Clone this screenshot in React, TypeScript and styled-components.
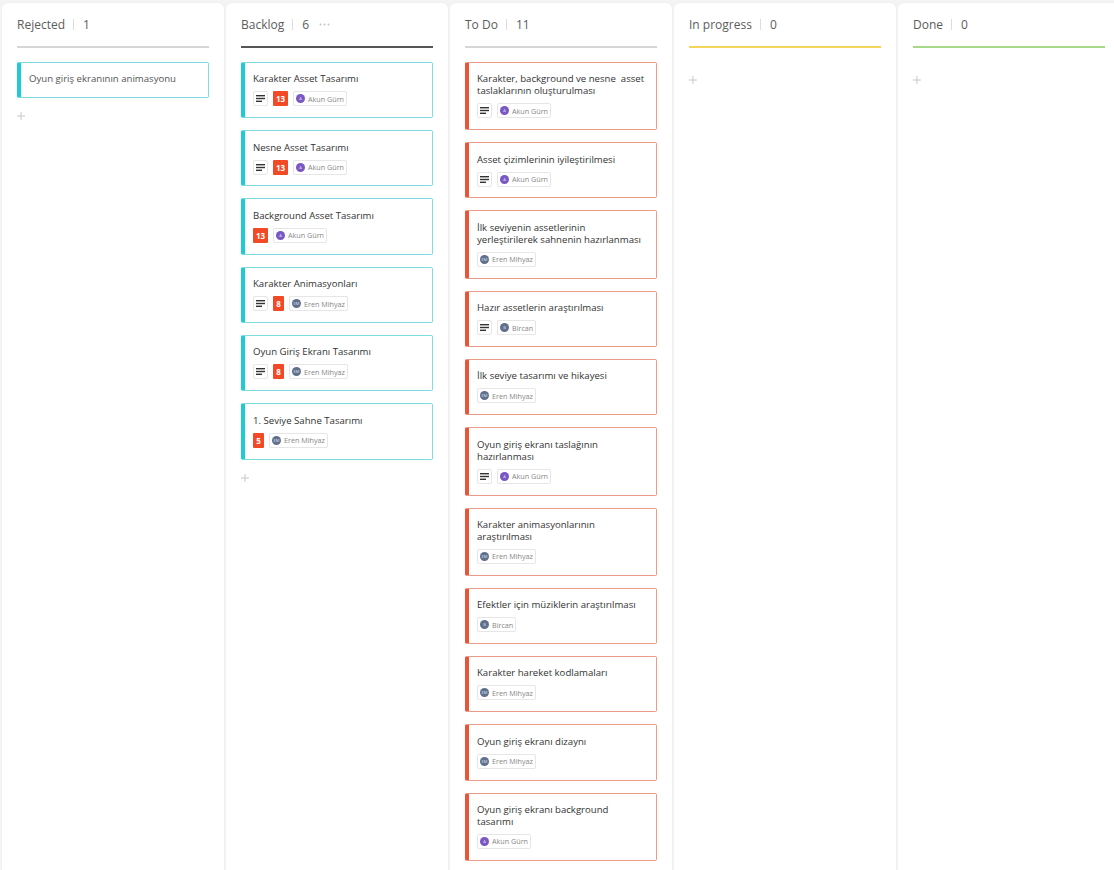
import React from "react";
import styled, { createGlobalStyle } from "styled-components";

const GlobalStyle = createGlobalStyle`
	html, body {
		margin: 0;
		padding: 0;
		height: 870px;
		overflow: hidden;
		background-color: #f4f4f4;
		font-family: "Open Sans", "Noto Sans", sans-serif;
	}
`;

const Board = styled.div`
	display: flex;
	gap: 2px;
	height: 870px;
	padding: 3px 0 0 2px;
	box-sizing: border-box;
	overflow: hidden;
`;

const Column = styled.section`
	flex: 0 0 222px;
	display: flex;
	flex-direction: column;
	box-sizing: border-box;
	padding: 0 15px;
	background-color: #fff;
	border-radius: 6px 6px 0 0;
	box-shadow: 0 0 2px rgba(0, 0, 0, 0.06);
`;

const Header = styled.header<{ $line: string }>`
	flex: none;
	display: flex;
	align-items: center;
	height: 45px;
	box-sizing: border-box;
	border-bottom: 2px solid ${(props) => props.$line};
	margin-bottom: 13.91px;
	font-size: 12px;
	color: #5c5c5c;
`;

const Separator = styled.span`
	width: 1px;
	height: 11px;
	margin: 0 9px 0 8px;
	background-color: #ddd;
`;

const Dots = styled.svg`
	margin-left: 10px;
`;

const CardList = styled.div`
	flex: none;
	display: flex;
	flex-direction: column;
	gap: 12px;
`;

const Card = styled.article<{ $color: string; $border: string }>`
	box-sizing: border-box;
	min-height: 36px;
	padding: 10.4px 10px 10.89px 8px;
	border: 1px solid ${(props) => props.$border};
	border-left: 4px solid ${(props) => props.$color};
	border-radius: 2px;
	background-color: #fff;
`;

const CardTitle = styled.div<{ $muted?: boolean }>`
	font-size: 9.6px;
	line-height: 12px;
	color: ${(props) => (props.$muted ? "#555" : "#333")};
	white-space: pre-wrap;
`;

const Meta = styled.div`
	display: flex;
	align-items: center;
	gap: 5px;
	margin-top: 6px;
	height: 15px;
`;

const IconChip = styled.span`
	display: flex;
	align-items: center;
	justify-content: center;
	width: 15px;
	height: 15px;
	box-sizing: border-box;
	border: 1px solid #e6e6e6;
	border-radius: 2px;
`;

const Points = styled.span<{ $wide?: boolean }>`
	display: flex;
	align-items: center;
	justify-content: center;
	width: ${(props) => (props.$wide ? "15px" : "11px")};
	height: 15px;
	background-color: #f24a26;
	color: #fff;
	font-size: 8px;
	font-weight: 700;
	border-radius: 1px;
`;

const Assignee = styled.span`
	display: flex;
	align-items: center;
	gap: 3px;
	height: 15px;
	box-sizing: border-box;
	padding: 0 2px;
	border: 1px solid #e6e6e6;
	border-radius: 2px;
	font-size: 7.2px;
	color: #888;
`;

const Avatar = styled.span<{ $color: string }>`
	display: flex;
	align-items: center;
	justify-content: center;
	width: 9px;
	height: 9px;
	border-radius: 50%;
	background-color: ${(props) => props.$color};
	color: #dfe3ee;
	font-size: 4px;
`;

const AddButton = styled.svg`
	flex: none;
	display: block;
	margin-top: 12px;
`;

const people: Record<string, { initials: string; color: string }> = {
	"Akun Gürn": { initials: "A", color: "#7a57c2" },
	"Eren Mihyaz": { initials: "EM", color: "#5f6f8c" },
	Bircan: { initials: "B", color: "#5f6f8c" },
};

type Task = {
	title: string;
	person?: string;
	points?: number;
	notes?: boolean;
};

const columns: {
	name: string;
	count: number;
	line: string;
	more?: boolean;
	color: string;
	border: string;
	tasks: Task[];
}[] = [
	{
		name: "Rejected",
		count: 1,
		line: "#d6d6d6",
		color: "#1fcbd3",
		border: "#7fdde2",
		tasks: [{ title: "Oyun giriş ekranının animasyonu" }],
	},
	{
		name: "Backlog",
		count: 6,
		line: "#555",
		more: true,
		color: "#1fcbd3",
		border: "#7fdde2",
		tasks: [
			{ title: "Karakter Asset Tasarımı", notes: true, points: 13, person: "Akun Gürn" },
			{ title: "Nesne Asset Tasarımı", notes: true, points: 13, person: "Akun Gürn" },
			{ title: "Background Asset Tasarımı", points: 13, person: "Akun Gürn" },
			{ title: "Karakter Animasyonları", notes: true, points: 8, person: "Eren Mihyaz" },
			{ title: "Oyun Giriş Ekranı Tasarımı", notes: true, points: 8, person: "Eren Mihyaz" },
			{ title: "1. Seviye Sahne Tasarımı", points: 5, person: "Eren Mihyaz" },
		],
	},
	{
		name: "To Do",
		count: 11,
		line: "#d6d6d6",
		color: "#e8553a",
		border: "#ec9c86",
		tasks: [
			{ title: "Karakter, background ve nesne  asset taslaklarının oluşturulması", notes: true, person: "Akun Gürn" },
			{ title: "Asset çizimlerinin iyileştirilmesi", notes: true, person: "Akun Gürn" },
			{ title: "İlk seviyenin assetlerinin yerleştirilerek sahnenin hazırlanması", person: "Eren Mihyaz" },
			{ title: "Hazır assetlerin araştırılması", notes: true, person: "Bircan" },
			{ title: "İlk seviye tasarımı ve hikayesi", person: "Eren Mihyaz" },
			{ title: "Oyun giriş ekranı taslağının hazırlanması", notes: true, person: "Akun Gürn" },
			{ title: "Karakter animasyonlarının araştırılması", person: "Eren Mihyaz" },
			{ title: "Efektler için müziklerin araştırılması", person: "Bircan" },
			{ title: "Karakter hareket kodlamaları", person: "Eren Mihyaz" },
			{ title: "Oyun giriş ekranı dizaynı", person: "Eren Mihyaz" },
			{ title: "Oyun giriş ekranı background tasarımı", person: "Akun Gürn" },
		],
	},
	{ name: "In progress", count: 0, line: "#f6d55c", color: "#1fcbd3", border: "#7fdde2", tasks: [] },
	{ name: "Done", count: 0, line: "#a8d98a", color: "#1fcbd3", border: "#7fdde2", tasks: [] },
];

const NotesIcon = () => (
	<svg width="9" height="7" viewBox="0 0 9 7">
		<rect width="9" height="1.4" fill="#333" />
		<rect y="2.8" width="9" height="1.4" fill="#333" />
		<rect y="5.6" width="6" height="1.4" fill="#333" />
	</svg>
);

export default function App() {
	return (
		<Board>
			<GlobalStyle />
			{columns.map((column) => (
				<Column key={column.name}>
					<Header $line={column.line}>
						{column.name}
						<Separator />
						{column.count}
						{column.more && (
							<Dots width="11" height="3" viewBox="0 0 11 3">
								<circle cx="1.5" cy="1.5" r="1" fill="#c4c4c4" />
								<circle cx="5.5" cy="1.5" r="1" fill="#c4c4c4" />
								<circle cx="9.5" cy="1.5" r="1" fill="#c4c4c4" />
							</Dots>
						)}
					</Header>
					{column.tasks.length > 0 && (
						<CardList>
							{column.tasks.map((task) => (
								<Card key={task.title} $color={column.color} $border={column.border}>
									<CardTitle $muted={!task.person}>{task.title}</CardTitle>
									{task.person && (
										<Meta>
											{task.notes && (
												<IconChip>
													<NotesIcon />
												</IconChip>
											)}
											{task.points && <Points $wide={task.points > 9}>{task.points}</Points>}
											<Assignee>
												<Avatar $color={people[task.person].color}>{people[task.person].initials}</Avatar>
												{task.person}
											</Assignee>
										</Meta>
									)}
								</Card>
							))}
						</CardList>
					)}
					<AddButton width="8" height="12" viewBox="0 0 8 12">
						<path d="M4 2v8M0 6h8" stroke="#c8c8c8" strokeWidth="1" fill="none" />
					</AddButton>
				</Column>
			))}
		</Board>
	);
}
